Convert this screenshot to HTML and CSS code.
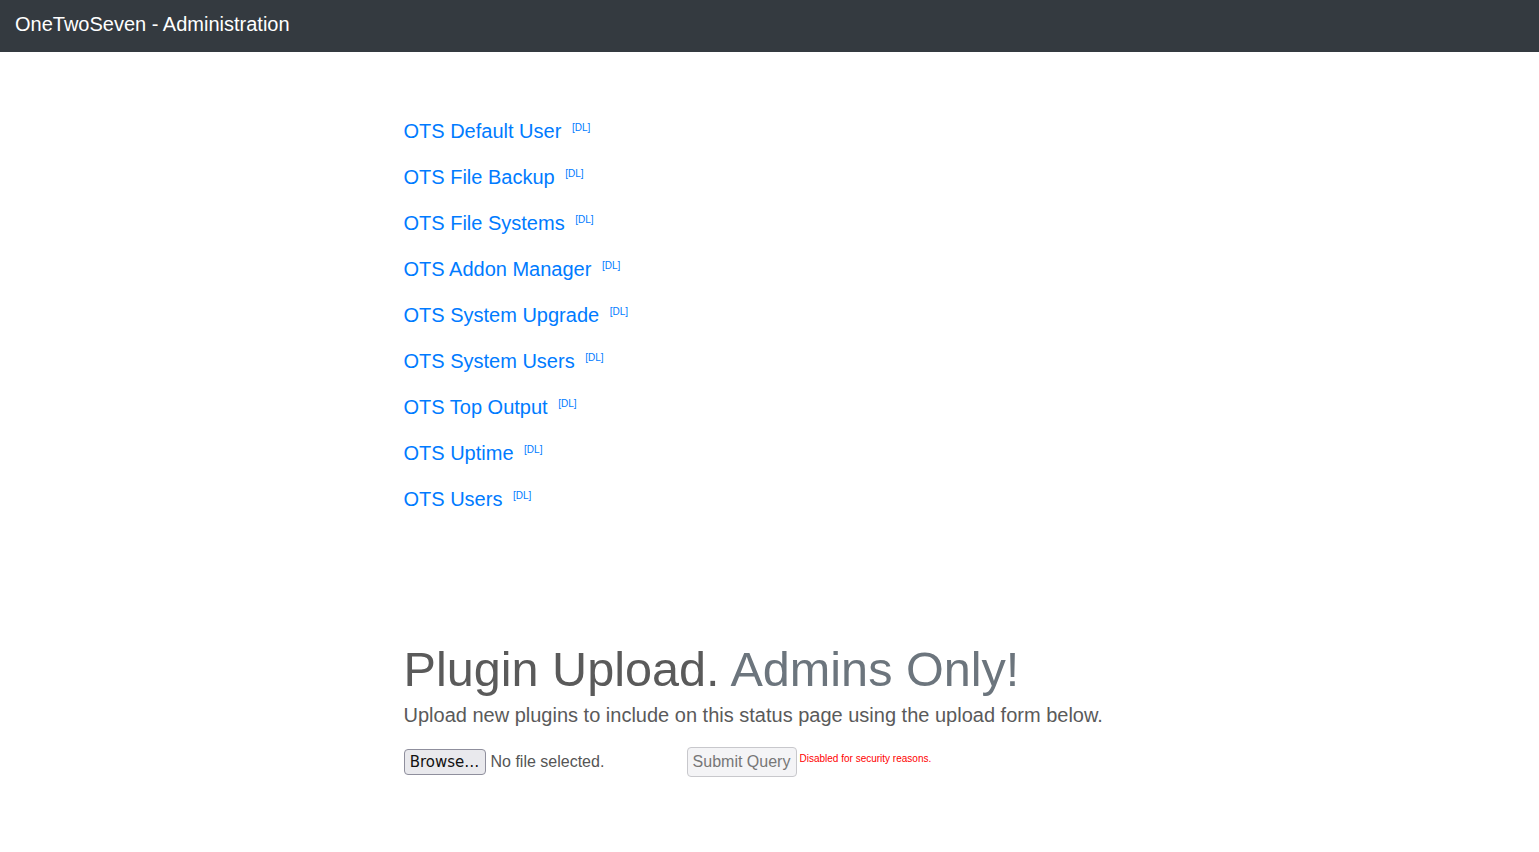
FILE: index.html
```html
<!DOCTYPE html>
<html lang="en">
<head>
<meta charset="utf-8">
<title>OneTwoSeven - Administration</title>
<link rel="stylesheet" href="styles.css">
</head>
<body>
<nav class="navbar">
  <span class="brand">OneTwoSeven - Administration</span>
</nav>
<main class="container">
  <div class="col">
    <div class="links">
      <p><a href="#">OTS Default User</a> <sup><a href="#">[DL]</a></sup></p>
      <p><a href="#">OTS File Backup</a> <sup><a href="#">[DL]</a></sup></p>
      <p><a href="#">OTS File Systems</a> <sup><a href="#">[DL]</a></sup></p>
      <p><a href="#">OTS Addon Manager</a> <sup><a href="#">[DL]</a></sup></p>
      <p><a href="#">OTS System Upgrade</a> <sup><a href="#">[DL]</a></sup></p>
      <p><a href="#">OTS System Users</a> <sup><a href="#">[DL]</a></sup></p>
      <p><a href="#">OTS Top Output</a> <sup><a href="#">[DL]</a></sup></p>
      <p><a href="#">OTS Uptime</a> <sup><a href="#">[DL]</a></sup></p>
      <p><a href="#">OTS Users</a> <sup><a href="#">[DL]</a></sup></p>
    </div>
    <h1 class="display">Plugin Upload. <span class="muted">Admins Only!</span></h1>
    <p class="lead">Upload new plugins to include on this status page using the upload form below.</p>
    <form class="upload">
      <span class="file">
        <span class="browse">Browse…</span>
        <span class="nofile">No file selected.</span>
      </span>
      <button type="button" class="submit" disabled>Submit Query</button>
      <span class="warn">Disabled for security reasons.</span>
    </form>
  </div>
</main>
</body>
</html>
```
FILE: styles.css
```css
* { box-sizing: border-box; }
html, body { margin: 0; padding: 0; }
body {
  font-family: "Liberation Sans", Arial, sans-serif;
  font-size: 16px;
  line-height: 1.5;
  color: #212529;
  background: #fff;
}
.navbar {
  background: #343a40;
  height: 52px;
  display: flex;
  align-items: center;
  padding: 0 15px 4px;
}
.brand {
  color: #fff;
  font-size: 20px;
  line-height: 30px;
}
.container {
  width: 1140px;
  margin: 0 auto;
  padding: 0 15px;
}
.col {
  margin-left: 189px;
  padding-top: 64px;
}
.links p {
  font-size: 20px;
  line-height: 30px;
  margin: 0 0 16px;
}
a { color: #007bff; text-decoration: none; }
sup {
  font-size: 10px;
  line-height: 0;
  position: relative;
  vertical-align: baseline;
  top: -7px;
  margin-left: 5px;
}
.links { margin-bottom: 126px; }
.display {
  font-size: 48.6px;
  font-weight: 400;
  line-height: 1.2;
  margin: 0 0 2px;
  color: #5a5a5a;
}
.muted { color: #6c757d; }
.lead {
  font-size: 20px;
  line-height: 30px;
  color: #5a5a5a;
  margin: 0 0 17px;
}
.upload {
  display: flex;
  align-items: center;
}
.file {
  display: flex;
  align-items: center;
  width: 283px;
}
.browse {
  font-family: "DejaVu Sans", sans-serif;
  font-size: 15px;
  color: #111;
  background: #e9e9ed;
  border: 1px solid #8f8f9d;
  border-radius: 4px;
  height: 26px;
  width: 82px;
  display: flex;
  align-items: center;
  justify-content: center;
  margin-right: 5px;
}
.nofile {
  font-size: 16px;
  color: #555;
}
.submit {
  font-family: "Liberation Sans", Arial, sans-serif;
  font-size: 16px;
  color: #777;
  background: #f4f4f6;
  border: 1px solid #c8c8cc;
  border-radius: 4px;
  height: 30px;
  width: 110px;
  padding: 0;
}
.warn {
  color: #ff0000;
  font-size: 10px;
  line-height: 15px;
  margin-left: 3px;
  align-self: flex-start;
  margin-top: 4px;
}
```
